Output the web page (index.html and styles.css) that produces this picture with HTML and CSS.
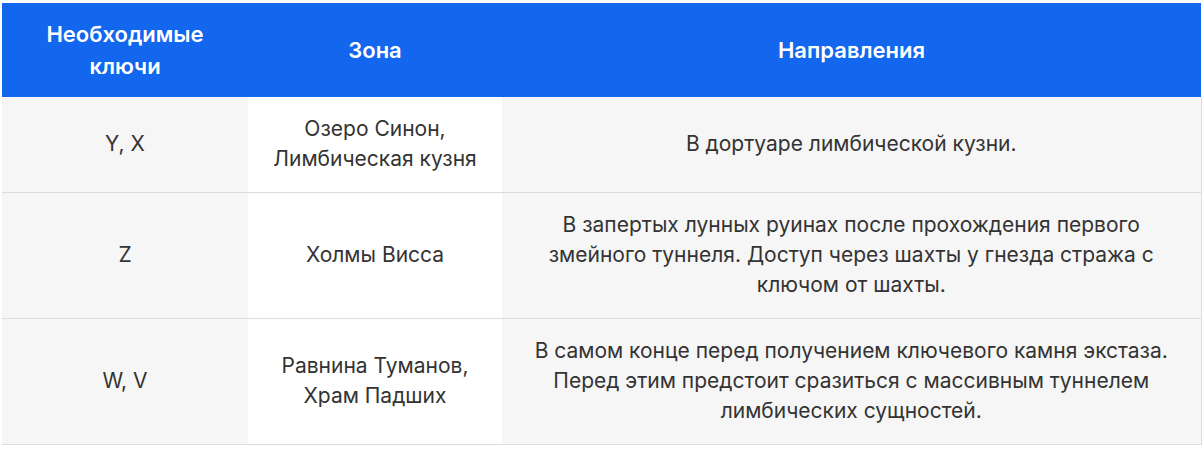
FILE: index.html
```html
<!DOCTYPE html>
<html lang="ru">
<head>
<meta charset="utf-8">
<title>Ключи</title>
<link rel="stylesheet" href="styles.css">
</head>
<body>
<table class="keys">
  <colgroup>
    <col class="c1">
    <col class="c2">
    <col class="c3">
  </colgroup>
  <thead>
    <tr>
      <th>Необходимые ключи</th>
      <th>Зона</th>
      <th>Направления</th>
    </tr>
  </thead>
  <tbody>
    <tr>
      <td>Y, X</td>
      <td class="zone">Озеро Синон, Лимбическая кузня</td>
      <td>В дортуаре лимбической кузни.</td>
    </tr>
    <tr>
      <td>Z</td>
      <td class="zone">Холмы Висса</td>
      <td>В запертых лунных руинах после прохождения первого змейного туннеля. Доступ через шахты у гнезда стража с ключом от шахты.</td>
    </tr>
    <tr>
      <td>W, V</td>
      <td class="zone">Равнина Туманов, Храм Падших</td>
      <td>В самом конце перед получением ключевого камня экстаза. Перед этим предстоит сразиться с массивным туннелем лимбических сущностей.</td>
    </tr>
  </tbody>
</table>
</body>
</html>
```

FILE: styles.css
```css
html, body {
  margin: 0;
  padding: 0;
  background: #ffffff;
}
body {
  padding: 3px 2px 0 2px;
  font-family: Inter, "Noto Sans", sans-serif;
}
.keys {
  width: 1199px;
  border-collapse: collapse;
  table-layout: fixed;
  font-size: 21px;
  line-height: 30px;
  color: #333333;
}
.c1 { width: 246px; }
.c2 { width: 254px; }
.c3 { width: 699px; }
.keys th {
  background: #1366ee;
  color: #ffffff;
  font-weight: 600;
  font-size: 22px;
  padding: 15px 16px;
  text-align: center;
  vertical-align: middle;
  line-height: 32px;
}
.keys td {
  background: #f6f6f6;
  padding: 17px 16px 18px;
  text-align: center;
  vertical-align: middle;
  border-bottom: 1px solid #dcdcdc;
}
.keys td:last-child {
  border-right: 1px solid #dcdcdc;
}
.keys td.zone {
  background: #ffffff;
}
```
